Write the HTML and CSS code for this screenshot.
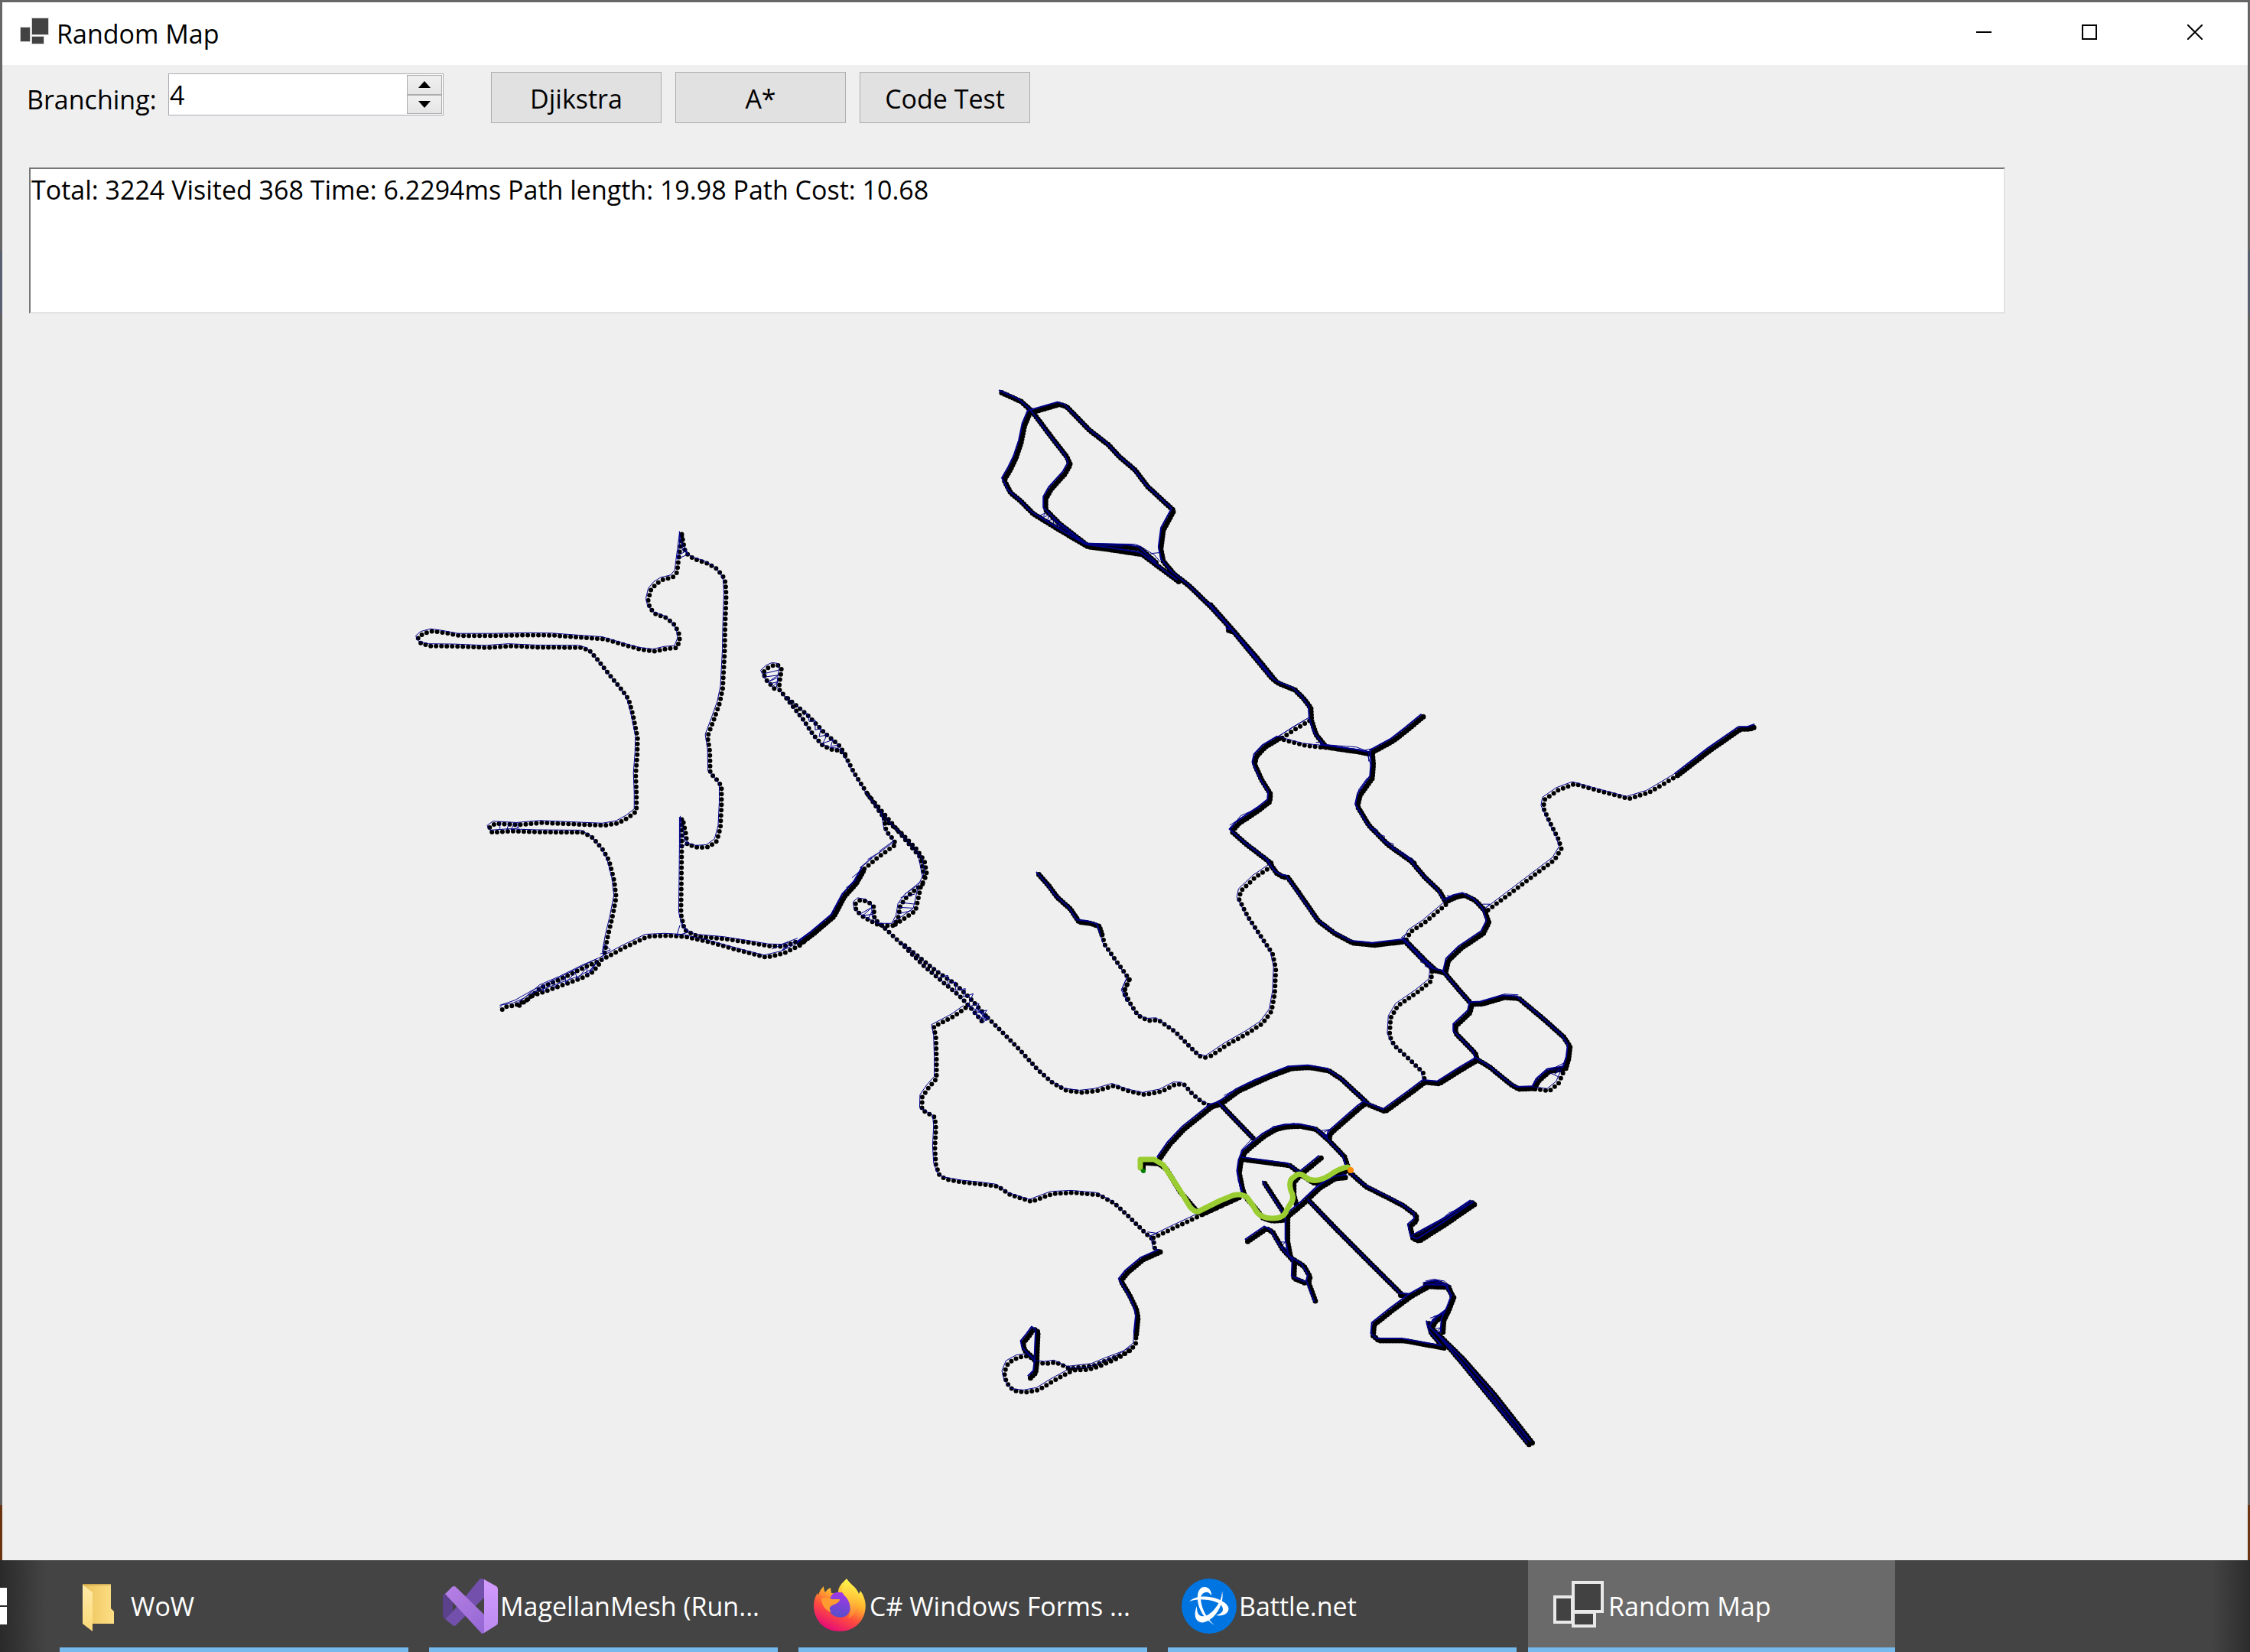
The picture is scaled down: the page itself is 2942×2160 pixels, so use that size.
FILE: index.html
```html
<!DOCTYPE html>
<html lang="en">
<head>
    <meta charset="UTF-8">
    <meta name="viewport" content="width=device-width, initial-scale=1.0">
    <title>Random Map</title>
    <link rel="stylesheet" href="styles.css">
</head>
<body>
    <main class="window">
        <header class="titlebar">
            <svg class="app-icon" viewBox="0 0 42 42" aria-hidden="true">
                <g fill="#424242" stroke="#d4d4d4" stroke-width="2" paint-order="stroke">
                    <rect x="3" y="15" width="12" height="18"/>
                    <rect x="18" y="3" width="21" height="21"/>
                    <rect x="18" y="27" width="15" height="9"/>
                </g>
            </svg>
            <h1>Random Map</h1>
            <div class="window-buttons">
                <button type="button" aria-label="Minimize"><svg viewBox="0 0 20 20"><path d="M0 10h20"/></svg></button>
                <button type="button" aria-label="Maximize"><svg viewBox="0 0 20 20"><path d="M1 1h18v18H1z"/></svg></button>
                <button type="button" aria-label="Close"><svg viewBox="0 0 20 20"><path d="M0 0l20 20M20 0L0 20"/></svg></button>
            </div>
        </header>

        <form class="toolbar">
            <label for="branching">Branching:</label>
            <div class="spinner">
                <input id="branching" type="text" inputmode="numeric" value="4">
                <div class="spinner-arrows">
                    <button type="button" aria-label="Up"><svg viewBox="0 0 16 9"><path d="M8 0l8 9H0z"/></svg></button>
                    <button type="button" aria-label="Down"><svg viewBox="0 0 16 9"><path d="M0 0h16L8 9z"/></svg></button>
                </div>
            </div>
            <div class="actions">
                <button type="button">Djikstra</button>
                <button type="button">A*</button>
                <button type="button">Code Test</button>
            </div>
        </form>

        <textarea class="output" aria-label="Output" readonly>Total: 3224 Visited 368 Time: 6.2294ms Path length: 19.98 Path Cost: 10.68</textarea>

        <svg class="map" viewBox="3 411 2936 1628" role="img" aria-label="Road map">
            <defs>
                <!-- roads with widely spaced nodes -->
                <g id="sparse">
                    <g transform="translate(520 680) scale(.5102 .4337)">
                        <path d="M728 45L735 90L740 103L760 120L790 131L815 147L833 170L840 190L842 230L839 330L838 400L833 510L825 555L810 605L794 655L800 700L801 765L820 788L830 805L830 860L827 930L818 970L797 988L770 990L742 980L738 945L730 902"/>
                        <path d="M728 50L724 85L719 130L716 160L705 175L680 182L662 195L648 215L642 245L646 267L660 285L690 298L708 317L720 340L723 365L715 388L690 390L660 398L625 393L590 382L530 361L480 357L400 350L340 349L250 351L160 351L120 342L90 337L65 345L52 358L60 375L85 382L150 383L230 387L290 382L360 386L470 387L490 394L510 420L540 465L575 515L592 543L603 590L615 660L614 710L610 770L612 830L612 880L590 900L565 916L530 923L470 920L370 915L310 921L250 917L235 930L242 944L290 940L360 943L475 944L500 960L527 998L542 1030L555 1090L560 1140L550 1200L538 1260L530 1310"/>
                        <path d="M268 1478L275 1470L300 1466L330 1450L370 1410L420 1385L480 1350L520 1330L580 1292L640 1258L690 1255L735 1258L800 1275L870 1298L945 1321L990 1308L1030 1285L1065 1250L1115 1200L1145 1135L1175 1100L1195 1055L1230 1020L1277 980L1270 965L1252 940L1245 890"/>
                        <path d="M312 1466L345 1437L390 1418L470 1384L500 1365L520 1335"/>
                        <path d="M728 905L728 985L727 1100L726 1190L735 1238L770 1258L840 1265L900 1276L955 1287L990 1288L1030 1270"/>
                        <path d="M965 510L945 485L936 462L950 447L965 439L978 441L984 453L980 480L977 512L1000 545L1040 605L1065 650L1090 683L1115 695L1135 697L1148 715L1170 765L1205 830L1240 890L1258 915L1290 945L1330 995L1350 1030L1356 1070L1340 1110L1333 1150L1327 1180L1300 1202L1275 1222"/>
                        <path d="M1345 1100L1305 1138L1288 1165L1283 1200L1272 1225L1235 1225L1195 1200L1175 1180L1173 1160L1185 1148L1205 1152L1220 1168L1222 1205L1255 1240L1300 1290L1350 1348L1400 1398L1440 1437L1470 1475L1500 1517"/>
                        <path d="M1000 540L1050 590L1095 645L1130 680L1148 710"/>
                        <path d="M1300 1285L1380 1362L1430 1402L1470 1448L1510 1500"/>
                        <path d="M1205 830L1255 900L1300 965L1340 1020L1350 1080"/>
                    </g>
                    <g transform="translate(1180 1280) scale(.4464 .3699)">
                        <path d="M185 105L150 135L92 172L98 210L100 290L100 355L78 385L58 420L57 465L95 492L98 530L95 600L98 660L108 695L125 710L180 722L230 728L280 736L315 765L378 790L440 762L500 758L575 766L620 795L665 845L715 905L735 925L740 960L755 968"/>
                        <path d="M735 918L800 880L880 835L990 775"/>
                        <path d="M250 140L300 200L345 255L395 322L440 370L480 397L525 404L570 398L620 380L660 398L710 412L760 400L800 375L825 376L850 410L880 440L900 450"/>
                        <path d="M665 5L650 45L665 85L690 132L720 150L750 148L800 190L840 240L870 275L896 283"/>
                        <path d="M395 1358L420 1363L450 1358L490 1380L560 1370L600 1350L655 1325L683 1297L685 1250"/>
                        <path d="M490 1392L440 1425L400 1455L360 1464L325 1458L305 1430L298 1395L310 1360L340 1340L370 1335L390 1355"/>
                        <path d="M490 1386L545 1384L580 1370L630 1344L675 1310"/>
                    </g>
                    <g transform="scale(1.8763)">
                        <path d="M768 652L770 659L777 669L787 683L783 692L787 700"/>
                    </g>
                    <g transform="translate(1580 900) scale(.4719 .3571)">
                        <path d="M175 655L130 695L90 745L85 775L110 840L145 910L178 975L187 1030L184 1120L175 1185L150 1230L110 1265L50 1310L0 1355"/>
                        <path d="M280 122L240 153L200 188L270 213L340 222L440 240"/>
                        <path d="M658 795L600 860L560 895L548 925"/>
                        <path d="M775 815L850 740L920 670L960 630L978 590L970 555L945 490L928 440L932 410L970 375L1015 353L1080 377L1165 407L1220 385L1265 350L1300 322"/>
                        <path d="M620 1040L617 1075L580 1115L525 1165L505 1210L502 1275L515 1310L560 1365L595 1410L600 1440"/>
                        <path d="M905 1470L945 1477L970 1450L985 1405L995 1370"/>
                    </g>
                </g>

                <!-- roads where the nodes run together -->
                <g id="dense">
                    <g transform="translate(520 680) scale(.5102 .4337)">
                        <path d="M1030 1280L1065 1250L1118 1197L1145 1137L1175 1098L1195 1057"/>
                    </g>
                    <g transform="scale(1.8763)">
                        <path d="M724 610L731 618L737 626L746 634L752 643L760 644L766 646L768 652"/>
                    </g>
                    <g transform="translate(1280 490) scale(.4592 .4082)">
                        <path d="M65 60L120 88L150 118L165 140L205 200L250 265L260 290L245 320L205 370L190 400L190 435L230 480L310 550"/>
                        <path d="M145 125L230 97L250 105L315 180L370 228L400 265L445 308L480 360L555 438L525 500L518 560L525 600L555 640L600 680L660 745L725 825L780 900L835 975L855 992L900 1012L925 1040L945 1070L947 1110L960 1155L985 1190"/>
                        <path d="M145 125L130 165L120 220L105 270L90 305L72 340L90 380L120 408L155 448L230 500L310 553L370 562L465 578L515 620L570 666"/>
                        <path d="M310 550L430 555L460 560L510 610"/>
                        <path d="M660 740L725 823L790 907L845 983"/>
                        <path d="M711 821L720 825"/>
                        <path d="M980 1193L1030 1202L1080 1210L1115 1218"/>
                        <path d="M1265 1098L1220 1140L1180 1175L1120 1212L1123 1250L1120 1295L1085 1350L1078 1385L1110 1445L1165 1508L1240 1568"/>
                        <path d="M855 1168L815 1195L790 1225L785 1250L805 1300L830 1345L828 1370L800 1395L740 1440L720 1465L760 1505L832 1567"/>
                    </g>
                    <g transform="translate(1580 900) scale(.4719 .3571)">
                        <path d="M170 643L190 680L208 694L220 695L250 750L305 855L350 900L400 935L460 943L545 930L590 990L625 1035L655 1045L690 1100L730 1160"/>
                        <path d="M545 925L605 1005L630 1035"/>
                        <path d="M560 632L600 695L640 745L658 785L685 768L710 760L740 780L765 815L777 860L762 900L700 955L665 1000L657 1045"/>
                        <path d="M1300 322L1390 230L1475 152L1500 152L1518 143"/>
                        <path d="M730 1160L725 1190L685 1240L685 1265L740 1340L745 1365L700 1400L640 1450L600 1445L560 1485L490 1552L440 1525"/>
                        <path d="M730 1160L760 1158L820 1135L860 1138L930 1215L985 1280L1002 1315L998 1360L990 1395L945 1405L915 1440L905 1465"/>
                        <path d="M745 1362L780 1390L840 1455L860 1470L905 1468"/>
                    </g>
                    <g transform="translate(1180 1280) scale(.4464 .3699)">
                        <path d="M755 968L705 995L660 1040L640 1070L665 1120L685 1170L690 1200L685 1260"/>
                        <path d="M375 1413L390 1395L393 1365L395 1300L397 1250L385 1240L370 1265L353 1290L358 1315L380 1340L395 1360"/>
                        <path d="M880 833L940 800L990 773"/>
                    </g>
                    <g transform="translate(1460 1360) scale(.4082 .3571)">
                        <path d="M85 476L85 452L135 455L160 475L205 560L262 635"/>
                        <path d="M138 438L170 385L215 330L305 247L325 240L345 228L390 190L430 168L500 132L560 107L620 103L680 115L720 145L802 232L780 250L740 290L685 345L680 370"/>
                        <path d="M335 240L385 300L440 365"/>
                        <path d="M440 385L475 353L510 330L545 320L590 318L640 330L680 370L730 430L742 470"/>
                        <path d="M440 385L410 415L398 450L393 490L403 545L410 572L440 612L470 655L500 665L535 662L600 600L650 545L700 510L742 505"/>
                        <path d="M410 440L555 462L590 492"/>
                        <path d="M655 435L590 495L568 525L568 570L576 605"/>
                        <path d="M475 528L530 625L548 660L548 740L558 800L600 830L620 870L615 890L640 968"/>
                        <path d="M420 740L480 693L500 705L530 765L570 815L568 875L610 895"/>
                        <path d="M590 495L635 528L670 520L710 495L742 480"/>
                        <path d="M620 595L700 690L800 805L910 930"/>
                        <path d="M750 490L800 540L870 580L920 610L960 645L960 665L940 685L950 730L970 738L1050 680L1150 602"/>
                        <path d="M955 725L1060 660L1140 598"/>
                        <path d="M910 937L945 940L1000 905L1060 908L1080 945L1065 990L1048 1030L1045 1080"/>
                        <path d="M990 900L1030 890L1065 908L1076 945"/>
                        <path d="M945 940L880 995L825 1045L822 1085L840 1103L920 1103L1050 1130"/>
                        <path d="M1060 1000L1020 1035L1010 1060L1040 1095L1100 1175L1200 1315L1322 1485"/>
                        <path d="M1030 1080L1110 1170L1210 1300L1332 1478"/>
                        <path d="M1000 1040L1008 1075L1045 1125"/>
                    </g>
                </g>

                <!-- extra edges between nearby roads -->
                <g id="links">
                    <g transform="translate(520 680) scale(.5102 .4337)">
                        <path d="M722 37L722 80L716 120L745 105L724 60M728 90L742 100M715 112L738 96M724 900L724 990L745 975L726 950M723 1225L715 1255L745 1245L728 1215M520 1310L545 1298L530 1280L525 1330"/>
                        <path d="M345 1430L375 1405L372 1425L400 1392L402 1412L430 1378L430 1400L455 1365L460 1387L485 1350L485 1375L510 1335L495 1365"/>
                        <path d="M262 1465L300 1450L345 1420L430 1372L510 1325M262 915L262 932M285 917L280 935M300 917L290 935L310 930M308 915L308 930"/>
                        <path d="M940 465L975 455M942 475L975 470L950 490L972 478M955 495L975 490L960 505M1040 590L1050 585L1055 610L1070 605L1070 635L1085 630L1080 655L1100 650L1090 675L1115 665L1110 685L1130 680"/>
                        <path d="M1290 1140L1325 1130M1285 1155L1325 1160M1285 1170L1320 1172M1282 1190L1315 1180M1300 1130L1330 1105M1185 1190L1215 1170L1192 1195L1220 1190M1205 1205L1217 1180"/>
                        <path d="M1150 1110L1180 1085M1165 1080L1185 1060M1185 1050L1215 1020M1205 1025L1240 1000M1235 1000L1270 970M960 1295L1000 1275L985 1300L1020 1270"/>
                        <path d="M1390 1380L1410 1375L1410 1400L1430 1395L1430 1420L1455 1415L1450 1440L1475 1430L1460 1470L1490 1460L1475 1490L1510 1480L1495 1505L1515 1500"/>
                        <path d="M1470 1470L1515 1505L1485 1475L1510 1512L1480 1490L1500 1518L1515 1500"/>
                    </g>
                    <g transform="translate(1280 490) scale(.4592 .4082)">
                        <path d="M170 455L190 445L180 462L200 450L195 470L215 465L210 485L235 480L225 495L250 492L245 508L270 510L262 522L290 530L310 543L445 545L460 552L500 580L515 600M490 575L515 572M310 548L410 552M215 470L300 538M220 480L296 538"/>
                        <path d="M850 1162L940 1100M1100 1205L1120 1200M960 1180L975 1180M982 1187L1075 1195L1110 1210L1110 1240M985 1190L1085 1203M715 1445L790 1390M718 1455L745 1415L800 1388M1108 1225L1118 1260M1072 1380L1082 1330L1105 1295"/>
                        <path d="M1110 1455L1135 1460L1130 1475L1155 1480L1150 1495L1180 1505L1175 1520L1210 1535L1240 1560"/>
                    </g>
                    <g transform="translate(1580 900) scale(.4719 .3571)">
                        <path d="M575 975L590 980L580 990L600 995L588 1005L612 1010L600 1020L622 1030M662 762L675 765L655 785M760 793L780 793L765 810M535 915L550 900M945 1410L970 1425M950 1400L975 1400L960 1415L980 1385M900 1455L930 1410L985 1375M770 1145L820 1122L858 1125"/>
                    </g>
                    <g transform="translate(1460 1360) scale(.4082 .3571)">
                        <path d="M650 335L682 330L655 345L675 350L660 358M345 205L440 148L550 97M500 320L570 307M440 355L400 405L398 430M388 470L390 520M398 530L405 570M520 742L540 742L528 760L545 765L535 775M600 585L650 535L700 500M722 490L740 500M100 705L130 710L105 720L125 745"/>
                        <path d="M990 885L1015 878L1050 885L1070 905M1005 885L1040 892L1000 895L1060 900M1005 1020L1035 1010L1010 1030L1050 1000L1015 1015M995 1040L1025 1025L998 1050M1020 1060L1040 1055L1025 1070L1042 1070M965 715L1060 650L1135 592M975 710L1050 650L1065 635L1140 600M1070 1135L1200 1305L1315 1465M1060 1120L1180 1280L1310 1470"/>
                    </g>
                </g>
            </defs>

            <use class="nodes nodes-sparse" href="#sparse"/>
            <use class="nodes nodes-dense" href="#dense"/>
            <g class="edges" transform="translate(-3 -3)">
                <use href="#sparse"/>
                <use class="edges-dense" href="#dense"/>
            </g>
            <use class="edges" href="#links"/>

            <!-- solved route -->
            <path class="route" d="M1491 1528V1517H1509L1521 1524L1542 1556L1556 1579Q1562 1586 1567 1585L1595 1571L1612 1564Q1624 1561 1631 1567L1640 1580Q1646 1594 1664 1594Q1679 1594 1682 1584L1686 1577Q1694 1568 1688 1558Q1684 1544 1692 1540Q1699 1532 1708 1541Q1720 1549 1738 1538Q1752 1528 1762 1527"/>
            <circle cx="1495" cy="1532" r="3" fill="green"/>
            <circle cx="1766" cy="1531" r="4" fill="darkorange"/>
        </svg>
    </main>

    <nav class="taskbar" aria-label="Taskbar">
        <button class="start" type="button" aria-label="Start"><span></span><span></span></button>

        <button class="task" type="button">
            <svg viewBox="0 0 72 72" aria-hidden="true">
                <defs>
                    <linearGradient id="folder" x1="0" x2="1"><stop offset="0" stop-color="#ebc25c"/><stop offset="1" stop-color="#fedf85"/></linearGradient>
                    <linearGradient id="flap" x1="0" y1="0" x2="0" y2="1"><stop offset="0" stop-color="#ffeba6"/><stop offset="1" stop-color="#fbd978"/></linearGradient>
                </defs>
                <path fill="url(#folder)" d="M12 7h37v32l4 4v16H12z"/>
                <path fill="none" stroke="#b08a3a" d="M12 8h37"/>
                <path fill="url(#flap)" d="M12 8l13 10v51L12 59z"/>
            </svg>
            <span>WoW</span>
        </button>

        <button class="task" type="button">
            <svg viewBox="0 0 72 72" aria-hidden="true">
                <defs>
                    <linearGradient id="vs-right" x1="0" y1="0" x2="0" y2="1"><stop offset="0" stop-color="#d29bff"/><stop offset="1" stop-color="#bb8af0"/></linearGradient>
                    <linearGradient id="vs-front" x1="0" y1="0" x2="1" y2="1"><stop offset="0" stop-color="#b881e6"/><stop offset="1" stop-color="#9467d3"/></linearGradient>
                </defs>
                <path fill="#5b418c" d="M0 22l3-3 10 10v15L3 53l-3-3z"/>
                <path fill="#7250ab" d="M3 53l10-10L48 1q2-2 6 0v24L17 61q-2 2-4 0z"/>
                <path fill="url(#vs-front)" d="M3 20l9-9q3-2 5 0l37 36v24l-3 1z"/>
                <path fill="url(#vs-right)" d="M54 1l16 9q2 1 2 4v43q0 3-2 4L54 71z"/>
            </svg>
            <span>MagellanMesh (Run...</span>
        </button>

        <button class="task" type="button">
            <svg viewBox="0 0 72 72" aria-hidden="true">
                <defs>
                    <linearGradient id="fox" x1=".8" y1="0" x2=".3" y2="1"><stop offset=".1" stop-color="#fff24a"/><stop offset=".4" stop-color="#ffb02e"/><stop offset=".65" stop-color="#ff4f3c"/><stop offset="1" stop-color="#e4067c"/></linearGradient>
                    <linearGradient id="tail" x1="0" y1="0" x2="0" y2="1"><stop offset="0" stop-color="#fff24a"/><stop offset=".5" stop-color="#ffc43a"/><stop offset="1" stop-color="#ff7a36"/></linearGradient>
                    <linearGradient id="globe" x1=".6" y1="0" x2=".4" y2="1"><stop offset="0" stop-color="#a436e8"/><stop offset="1" stop-color="#5650c8"/></linearGradient>
                </defs>
                <path fill="url(#fox)" d="M45 0C50 8 58 11 61 20l2-4c6 8 8 18 6 27-3 15-16 26-33 26C17 69 3 56 2 37c0-8 2-14 5-18l1 3c1-5 4-9 7-12 0 4 1 6 2 8 2-3 4-5 7-6 0 3 1 5 1 7l9 1C33 11 39 6 45 0z"/>
                <path fill="url(#globe)" d="M26 21c5-5 15-4 19 1 8 8 7 22-1 27-8 4-19 1-22-8-2-7 0-14 4-20z"/>
                <path fill="#ff9b30" d="M12 26c6-2 10-1 14 1h10c0 4-5 6-10 8-5 3-3 6-1 9-8-2-13-10-13-18z"/>
                <path fill="url(#tail)" d="M45 2c7 12 15 23 13 37-2 8-6 11-11 13 5-10 3-22-4-29-7-6-3-14 2-21z"/>
            </svg>
            <span>C# Windows Forms ...</span>
        </button>

        <button class="task" type="button">
            <svg viewBox="0 0 72 72" aria-hidden="true">
                <circle cx="36" cy="36" r="36" fill="#0074e0"/>
                <g fill="#fff">
                    <path d="M21 28c-1-11 3-17 9-17s9 5 9 11c-3-4-5-5-8-4-4 1-6 4-6 9 1 13 8 25 18 34C30 53 22 41 21 28z"/>
                    <path d="M10 30c8-8 26-8 38-3 12 5 17 12 11 18-3 3-9 4-14 3 6-2 9-4 9-8 0-6-7-9-14-11-10-2-21-3-30 1z"/>
                    <path d="M53 16c2 10-1 21-8 30-7 9-17 14-23 10-6-4-5-13-2-20 0 7 1 12 6 13s11-2 17-9 10-15 10-24z"/>
                </g>
            </svg>
            <span>Battle.net</span>
        </button>

        <button class="task active" type="button">
            <svg viewBox="0 0 72 72" aria-hidden="true">
                <g fill="#424242" stroke="#e8e8e8" stroke-width="4">
                    <rect x="5" y="24" width="23" height="33"/>
                    <rect x="29" y="44" width="28" height="18"/>
                    <rect x="29" y="5" width="38" height="38"/>
                </g>
            </svg>
            <span>Random Map</span>
        </button>
    </nav>
</body>
</html>
```

FILE: styles.css
```css
* {
    margin: 0;
    padding: 0;
    box-sizing: border-box;
}

body {
    min-height: 100vh;
    display: flex;
    flex-direction: column;
    font-family: 'Segoe UI', 'Open Sans', 'Noto Sans', sans-serif;
    font-size: 34px;
    line-height: 48px;
    color: #000;
    background: linear-gradient(#666 0 328px, #596070 328px 410px, #606060 410px 1968px, #6b3410 1968px);
}

button, input, textarea {
    font: inherit;
    color: inherit;
    border: 0;
    border-radius: 0;
    outline: 0;
}

.window {
    flex: 1;
    margin: 3px 3px 0;
    background: #efefef;
}

/* title bar */
.titlebar {
    display: flex;
    height: 82px;
    padding-left: 21px;
    background: #fff;
}

.app-icon {
    width: 42px;
    height: 42px;
    margin: 18px 8px 0 0;
}

.titlebar h1 {
    font-size: 34px;
    font-weight: 400;
    line-height: 82px;
}

.window-buttons {
    display: flex;
    height: 78px;
    margin-left: auto;
}

.window-buttons button {
    width: 138px;
    display: grid;
    place-items: center;
    background: none;
}

.window-buttons svg {
    width: 20px;
    height: 20px;
    fill: none;
    stroke: #000;
    stroke-width: 2;
}

/* controls */
.toolbar {
    display: flex;
    align-items: flex-start;
    height: 134px;
    padding: 9px 0 0 32px;
}

.toolbar label {
    width: 185px;
    line-height: 72px;
}

.spinner {
    display: flex;
    width: 360px;
    height: 55px;
    margin-top: 2px;
    padding: 1px;
    background: #fff;
    border: 1px solid #abadb3;
}

.spinner input {
    flex: 1;
    min-width: 0;
    background: none;
}

.spinner-arrows {
    display: flex;
    flex-direction: column;
    width: 46px;
}

.spinner-arrows button {
    flex: 1;
    display: grid;
    place-items: center;
    background: linear-gradient(#f0f0f0, #e5e5e5);
    border: 1px solid #acacac;
}

.spinner-arrows svg {
    width: 16px;
    height: 9px;
}

.actions {
    display: flex;
    gap: 18px;
    margin-left: 62px;
}

.actions button {
    width: 223px;
    height: 67px;
    padding-top: 2px;
    background: #e1e1e1;
    border: 1px solid #adadad;
}

.output {
    display: block;
    width: calc(100% - 352px);
    height: 191px;
    margin-left: 35px;
    padding: 3px 1px;
    resize: none;
    background: #fff;
    border: 2px solid;
    border-color: #777 #e3e3e3 #e3e3e3 #777;
}

/* map */
.map {
    display: block;
    width: 100%;
}

.map path {
    fill: none;
    stroke-linecap: round;
    stroke-linejoin: round;
    vector-effect: non-scaling-stroke;
}

.nodes {
    stroke: #000;
    stroke-width: 6px;
}

.nodes-sparse {
    stroke-dasharray: 0 7;
}

.nodes-dense {
    stroke-width: 7px;
    stroke-dasharray: 0 4;
}

.edges {
    stroke: #00008b;
    stroke-width: 1px;
}

.edges-dense {
    stroke-width: 2px;
}

.map .route {
    stroke: #9acd32;
    stroke-width: 7px;
}

/* taskbar */
.taskbar {
    display: flex;
    gap: 3px;
    height: 120px;
    color: #fff;
    background: linear-gradient(90deg, #2a2a2a, #444 60px calc(100% - 50px), #2c2c2c);
}

.start {
    width: 63px;
    display: flex;
    flex-direction: column;
    justify-content: center;
    gap: 2px;
    background: none;
}

.start span {
    width: 9px;
    height: 23px;
    background: #fff;
}

.task {
    position: relative;
    width: 480px;
    display: flex;
    align-items: center;
    gap: 3px;
    padding-left: 30px;
    background: none;
    white-space: nowrap;
}

.task svg {
    width: 72px;
    height: 72px;
}

.task::after {
    content: '';
    position: absolute;
    inset: auto 12px 0;
    height: 6px;
    background: #76b9ed;
}

.task.active {
    background: #6a6a6a;
}

.task.active::after {
    inset: auto 0 0;
}
```
